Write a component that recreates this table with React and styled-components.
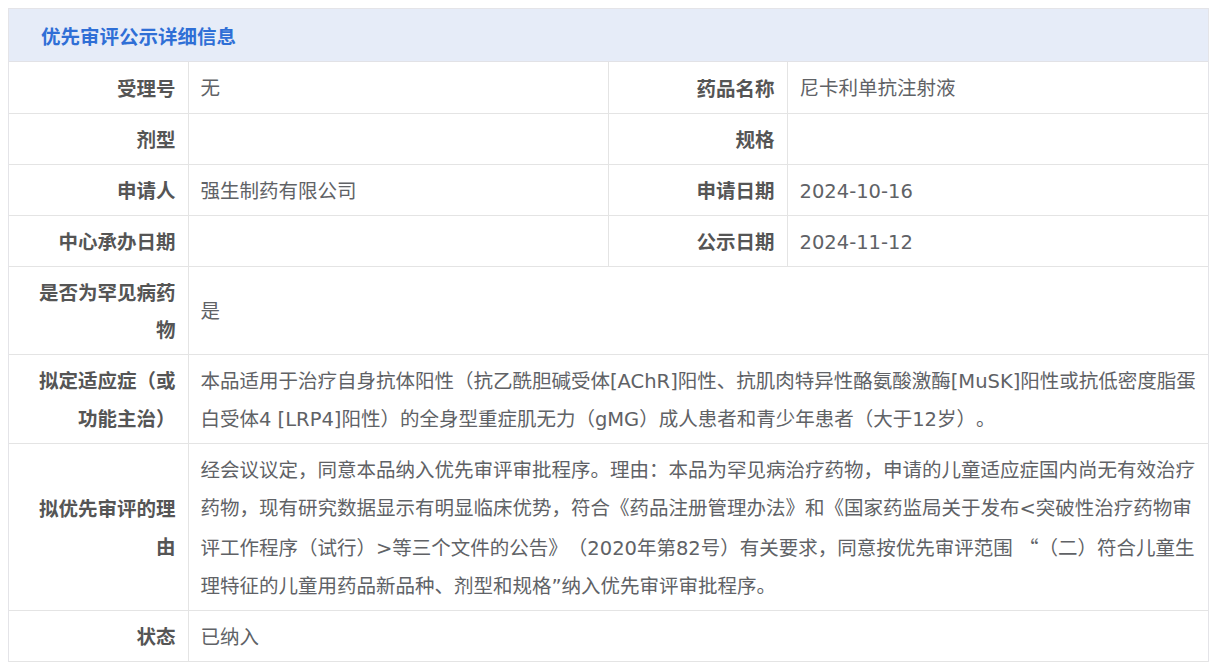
import React from "react";
import styled, { createGlobalStyle } from "styled-components";

const Global = createGlobalStyle`
  html, body { margin: 0; padding: 0; background: #fff; }
  body {
    font-family: "DejaVu Sans", "Noto Sans CJK SC", sans-serif;
    text-spacing-trim: space-all;
  }
`;

const Page = styled.div`
  padding: 8px 4px 8px 8px;
`;

const Panel = styled.section`
  width: 1199px;
  border: 1px solid #e4e4e8;
  border-bottom: none;
`;

const Header = styled.h2`
  margin: 0;
  height: 52px;
  display: flex;
  align-items: center;
  padding-left: 32px;
  background: #e6ecf8;
  border-bottom: 1px solid #e2e2e6;
  color: #2f6fd6;
  font-family: "Noto Sans CJK SC", sans-serif;
  font-size: 19.5px;
  font-weight: 700;
`;

const Table = styled.table`
  width: 100%;
  border-collapse: collapse;
  table-layout: fixed;
`;

const Row = styled.tr`
  border-bottom: 1px solid #e4e4e4;
`;

const Label = styled.th`
  height: 51px;
  box-sizing: border-box;
  padding: 6px 12px;
  text-align: right;
  vertical-align: middle;
  font-family: "Noto Sans CJK SC", sans-serif;
  font-size: 19.5px;
  line-height: 37.5px;
  font-weight: 700;
  color: #555;
  border-right: 1px solid #e4e4e4;
  border-left: ${(p) => (p.$second ? "1px solid #e4e4e4" : "none")};
  word-break: break-all;
`;

const Value = styled.td`
  height: 51px;
  box-sizing: border-box;
  padding: 8px 11px 4px 12px;
  text-align: left;
  vertical-align: middle;
  font-size: 19.5px;
  line-height: 38px;
  color: #606266;
  word-break: break-all;
`;

const Cjk = styled.span`
  font-family: "Noto Sans CJK SC", sans-serif;
`;

const pairs = [
  ["受理号", "无", "药品名称", "尼卡利单抗注射液"],
  ["剂型", "", "规格", ""],
  ["申请人", "强生制药有限公司", "申请日期", "2024-10-16"],
  ["中心承办日期", "", "公示日期", "2024-11-12"],
];

const wide = [
  ["是否为罕见病药物", "是"],
  [
    "拟定适应症（或功能主治）",
    "本品适用于治疗自身抗体阳性（抗乙酰胆碱受体[AChR]阳性、抗肌肉特异性酪氨酸激酶[MuSK]阳性或抗低密度脂蛋白受体4 [LRP4]阳性）的全身型重症肌无力（gMG）成人患者和青少年患者（大于12岁）。",
  ],
  [
    "拟优先审评的理由",
    <>
      经会议议定，同意本品纳入优先审评审批程序。理由：本品为罕见病治疗药物，申请的儿童适应症国内尚无有效治疗药物，现有研究数据显示有明显临床优势，符合《药品注册管理办法》和《国家药监局关于发布&lt;突破性治疗药物审评工作程序（试行）&gt;等三个文件的公告》（2020年第82号）有关要求，同意按优先审评范围 <Cjk>“</Cjk>（二）符合儿童生理特征的儿童用药品新品种、剂型和规格”纳入优先审评审批程序。
    </>,
  ],
  ["状态", "已纳入"],
];

export default function App() {
  return (
    <Page>
      <Global />
      <Panel>
        <Header>优先审评公示详细信息</Header>
        <Table>
          <colgroup>
            <col style={{ width: "179px" }} />
            <col style={{ width: "420px" }} />
            <col style={{ width: "179px" }} />
            <col />
          </colgroup>
          <tbody>
            {pairs.map(([a, b, c, d]) => (
              <Row key={a}>
                <Label>{a}</Label>
                <Value>{b}</Value>
                <Label $second>{c}</Label>
                <Value>{d}</Value>
              </Row>
            ))}
            {wide.map(([a, b]) => (
              <Row key={a}>
                <Label>{a}</Label>
                <Value colSpan={3}>{b}</Value>
              </Row>
            ))}
          </tbody>
        </Table>
      </Panel>
    </Page>
  );
}
